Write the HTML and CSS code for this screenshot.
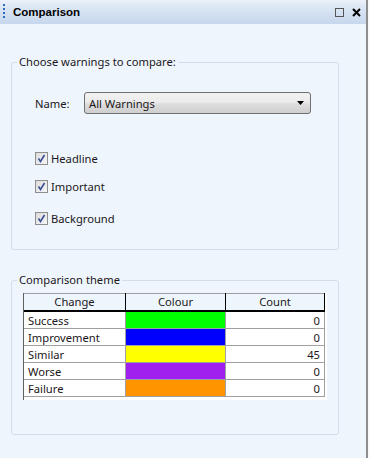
FILE: index.html
```html
<!DOCTYPE html>
<html>
<head>
<meta charset="utf-8">
<link rel="stylesheet" href="styles.css">
</head>
<body>
<div class="panel">
  <div class="titlebar">
    <div class="grip"></div>
    <div class="title">Comparison</div>
    <div class="tb-icons">
      <span class="sq"></span>
      <svg class="close" width="9" height="9" viewBox="0 0 9 9"><path d="M1 1 L8 8 M8 1 L1 8" stroke="#000" stroke-width="2"/></svg>
    </div>
  </div>
  <div class="content">
    <fieldset class="group g1">
      <legend>Choose warnings to compare:</legend>
      <div class="name-row">
        <span class="label">Name:</span>
        <div class="select">
          <span>All Warnings</span>
          <svg class="arrow" width="7" height="4" viewBox="0 0 7 4"><path d="M0 0 H7 L3.5 4 Z" fill="#000"/></svg>
        </div>
      </div>
      <div class="checks">
        <label class="check c1"><span class="box"><svg width="11" height="11" viewBox="0 0 11 11"><path d="M2.5 5.5 L4.5 8.5 L8.5 2" stroke="#3b4f95" stroke-width="1.6" fill="none"/></svg></span>Headline</label>
        <label class="check c2"><span class="box"><svg width="11" height="11" viewBox="0 0 11 11"><path d="M2.5 5.5 L4.5 8.5 L8.5 2" stroke="#3b4f95" stroke-width="1.6" fill="none"/></svg></span>Important</label>
        <label class="check c3"><span class="box"><svg width="11" height="11" viewBox="0 0 11 11"><path d="M2.5 5.5 L4.5 8.5 L8.5 2" stroke="#3b4f95" stroke-width="1.6" fill="none"/></svg></span>Background</label>
      </div>
    </fieldset>
    <fieldset class="group g2">
      <legend>Comparison theme</legend>
      <div class="grid">
        <table>
          <thead>
            <tr><th class="c-change">Change</th><th class="c-colour">Colour</th><th class="c-count">Count</th></tr>
          </thead>
          <tbody>
            <tr><td>Success</td><td class="sw green"></td><td class="num">0</td></tr>
            <tr><td>Improvement</td><td class="sw blue"></td><td class="num">0</td></tr>
            <tr><td>Similar</td><td class="sw yellow"></td><td class="num">45</td></tr>
            <tr><td>Worse</td><td class="sw purple"></td><td class="num">0</td></tr>
            <tr><td>Failure</td><td class="sw orange"></td><td class="num">0</td></tr>
          </tbody>
        </table>
      </div>
    </fieldset>
  </div>
</div>
</body>
</html>
```
FILE: styles.css
```css
html, body {
  margin: 0;
  padding: 0;
  background: #fafafa;
}
body {
  width: 370px;
  height: 458px;
  overflow: hidden;
  font-family: "Noto Sans", "Open Sans", sans-serif;
  font-size: 11.2px;
  color: #1b1620;
}
.panel {
  width: 366px;
  height: 458px;
  background: #eef5fd;
  border-right: 2px solid #8e8e8e;
  box-sizing: content-box;
}
.titlebar {
  height: 24px;
  display: flex;
  align-items: center;
  background: linear-gradient(#eef3fa 0px, #e1eaf6 4px, #d3e0f1 14px, #c6d7ed 24px);
  position: relative;
}
.grip {
  width: 2px;
  height: 16px;
  margin-left: 3px;
  background: repeating-linear-gradient(#2f6cc0 0 2px, transparent 2px 4px);
}
.title {
  margin-left: 8px;
  font-family: "Liberation Sans", Arial, sans-serif;
  font-weight: bold;
  font-size: 11.5px;
  color: #000;
  flex: 1;
}
.tb-icons {
  display: flex;
  align-items: center;
  gap: 8px;
  margin-right: 5px;
}
.sq {
  width: 7px;
  height: 7px;
  border: 1px solid #555;
  display: block;
}
.close { display: block; }
.content {
  padding: 0 28px 0 11px;
}
.group {
  margin: 0;
  border: 1px solid #d3dde6;
  border-radius: 3px;
  padding: 0;
  box-sizing: border-box;
  width: 328px;
}
.group legend {
  margin-left: 5px;
  padding: 0 2px;
  font-size: 11.2px;
  line-height: 16px;
}
.g1 {
  margin-top: 30px;
  height: 196px;
}
.name-row {
  display: flex;
  align-items: center;
  margin-top: 22px;
  padding-left: 23px;
}
.label {
  width: 49px;
}
.select {
  width: 227px;
  height: 22px;
  box-sizing: border-box;
  border: 1px solid #707070;
  border-radius: 3px;
  background: linear-gradient(#f2f2f2 0%, #ebebeb 45%, #dddddd 55%, #cfcfcf 100%);
  display: flex;
  align-items: center;
  padding: 0 6px 0 4px;
  justify-content: space-between;
}
.checks {
  padding-left: 23px;
  margin-top: 37px;
  display: flex;
  flex-direction: column;
}
.check {
  display: flex;
  align-items: center;
  height: 14px;
}
.c2 { margin-top: 14px; }
.c3 { margin-top: 18px; }
.box {
  width: 13px;
  height: 13px;
  box-sizing: border-box;
  border: 1px solid #8f8f8f;
  background: linear-gradient(135deg, #dcdcdc, #f6f6f6);
  margin-right: 3px;
  display: flex;
  align-items: center;
  justify-content: center;
}
.box svg { display: block; }
.g2 {
  margin-top: 22px;
  height: 163px;
}
.grid {
  margin-left: 11px;
  margin-top: 5px;
  width: 304px;
  height: 107px;
  background: #fff;
  border-left: 1px solid #606060;
  box-sizing: border-box;
}
table {
  border-collapse: collapse;
  width: 301px;
  table-layout: fixed;
  font-size: 11.2px;
}
th {
  height: 16px;
  padding: 0;
  font-weight: normal;
  background: #eef6fd;
  border-top: 1px solid #a0a0a0;
  border-right: 1px solid #000;
  border-bottom: 2px solid #000;
  text-align: center;
  line-height: 16px;
}
.c-change { width: 101px; }
.c-colour { width: 99px; }
td {
  height: 16px;
  padding: 0 0 0 4px;
  border-right: 1px solid #a0a0a0;
  border-bottom: 1px solid #a0a0a0;
  line-height: 15px;
  white-space: nowrap;
}
td.num { text-align: right; padding: 0 4px 0 0; }
.green { background: #00ff00; }
.blue { background: #0000ff; }
.yellow { background: #ffff00; }
.purple { background: #a020f0; }
.orange { background: #ff9400; }
```
